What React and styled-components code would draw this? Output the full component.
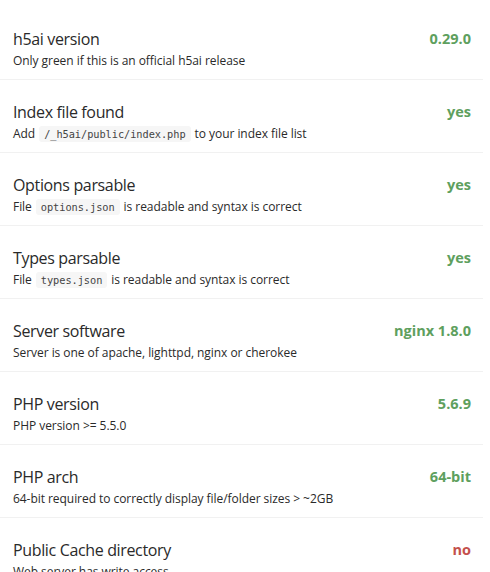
import React from 'react';
import styled, { createGlobalStyle } from 'styled-components';

const GlobalStyle = createGlobalStyle`
  html, body {
    margin: 0;
    padding: 0;
    background: #fff;
  }
  body {
    font-family: "Open Sans", "Noto Sans", sans-serif;
    color: #333;
  }
`;

const List = styled.ul`
  list-style: none;
  margin: 0;
  padding: 7px 0 0;
  width: 483px;
`;

const Row = styled.li`
  display: flex;
  justify-content: space-between;
  align-items: flex-start;
  padding: 22px 12px 9px 13px;
  border-bottom: 1px solid #f1f1f1;
  height: 41px;
`;

const Info = styled.div`
  display: flex;
  flex-direction: column;
  gap: 3px;
`;

const Label = styled.div`
  font-size: 16px;
  line-height: 20px;
  letter-spacing: -0.35px;
  color: #2a2a2a;
`;

const Hint = styled.div`
  font-size: 12px;
  line-height: 18px;
  letter-spacing: -0.05px;
  color: #2a2a2a;
`;

const Code = styled.code`
  font-family: "DejaVu Sans Mono", "Liberation Mono", monospace;
  font-size: 10.3px;
  background: #f6f6f6;
  border-radius: 3px;
  padding: 2px 5px;
  margin: 0 4px;
  color: #444;
`;

const Result = styled.div`
  font-size: 14.5px;
  line-height: 20px;
  font-weight: 700;
  color: ${(p) => (p.$ok ? '#5ea05e' : '#c4504c')};
`;

const checks = [
  { label: 'h5ai version', hint: ['Only green if this is an official h5ai release'], result: '0.29.0', ok: true },
  { label: 'Index file found', hint: ['Add', '/_h5ai/public/index.php', 'to your index file list'], result: 'yes', ok: true },
  { label: 'Options parsable', hint: ['File', 'options.json', 'is readable and syntax is correct'], result: 'yes', ok: true },
  { label: 'Types parsable', hint: ['File', 'types.json', 'is readable and syntax is correct'], result: 'yes', ok: true },
  { label: 'Server software', hint: ['Server is one of apache, lighttpd, nginx or cherokee'], result: 'nginx 1.8.0', ok: true },
  { label: 'PHP version', hint: ['PHP version >= 5.5.0'], result: '5.6.9', ok: true },
  { label: 'PHP arch', hint: ['64-bit required to correctly display file/folder sizes > ~2GB'], result: '64-bit', ok: true },
  { label: 'Public Cache directory', hint: ['Web server has write access'], result: 'no', ok: false },
];

const App = () => {
  return (
    <>
      <GlobalStyle />
      <List>
        {checks.map((c) => (
          <Row key={c.label}>
            <Info>
              <Label>{c.label}</Label>
              <Hint>
                {c.hint.length === 3 ? (
                  <>
                    {c.hint[0]}
                    <Code>{c.hint[1]}</Code>
                    {c.hint[2]}
                  </>
                ) : (
                  c.hint[0]
                )}
              </Hint>
            </Info>
            <Result $ok={c.ok}>{c.result}</Result>
          </Row>
        ))}
      </List>
    </>
  );
};

export default App;
